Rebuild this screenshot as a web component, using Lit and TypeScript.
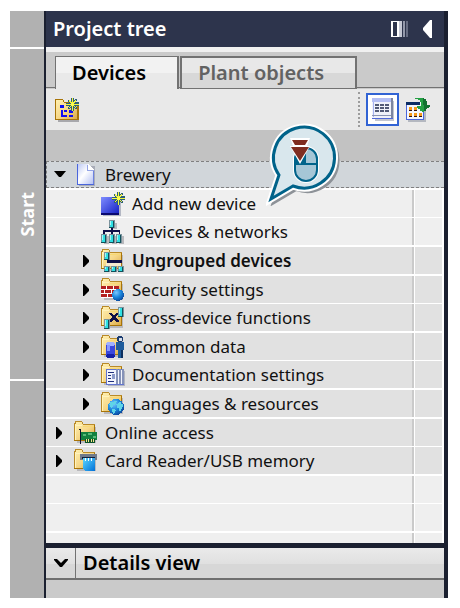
import { LitElement, html, svg, css, nothing } from "lit";
import { customElement, property } from "lit/decorators.js";
import { classMap } from "lit/directives/class-map.js";

/* Folder body shared by most tree icons */
const folder = svg`
  <path d="M3 6h19v16H3z" fill="#b9b9bd"/>
  <path d="M1 2h1V1h6v1h1v2h12v16H1z" fill="url(#fold)"/>
  <path d="M0 20V2h1V0h7v1h1v2h12v1H9V3H8V1H2v2H1v16z" fill="#b98a28"/>
  <path d="M20 4h1v16H0v-1h20z" fill="#a87408"/>
  <path d="M1 3h1v16H1zM2 4h6v1H2z" fill="#fff3bd"/>
  <path d="M9 5h11v1H9z" fill="#f8d873"/>`;

const defs = svg`<defs>
  <linearGradient id="fold" x1="0" y1="0" x2="1" y2="1">
    <stop offset="0" stop-color="#fff0b0"/><stop offset=".5" stop-color="#f6d788"/><stop offset="1" stop-color="#d9a640"/>
  </linearGradient>
  <linearGradient id="blue" x1="0" y1="0" x2="1" y2="1">
    <stop offset="0" stop-color="#7f8dff"/><stop offset="1" stop-color="#1520c4"/>
  </linearGradient>
  <linearGradient id="paper" x1="0" y1="0" x2="1" y2="1">
    <stop offset="0" stop-color="#b9c6f4"/><stop offset=".45" stop-color="#ffffff"/><stop offset="1" stop-color="#aebcf2"/>
  </linearGradient>
  <radialGradient id="ball" cx=".35" cy=".3" r=".8">
    <stop offset="0" stop-color="#7cc8ff"/><stop offset=".5" stop-color="#1a86dc"/><stop offset="1" stop-color="#0a3f94"/>
  </radialGradient>
  <linearGradient id="cyan" x1="0" y1="0" x2="1" y2="1">
    <stop offset="0" stop-color="#5fd8ff"/><stop offset="1" stop-color="#0070d8"/>
  </linearGradient>
</defs>`;

const star = (x: number, y: number) => svg`<g transform="translate(${x} ${y})">
  <path d="M5 0h3v2h1V1h2v2h-1v1h3v4h-3v1h1v2H9v-1H8v3H5v-3H4v1H2V9h1V8H0V5h3V4H2V2h2v1h1z" fill="#2c6078"/>
  <path d="M6 0h1v4h1V3h1V2h1v2H9v1h-1v1h5v1H8v1h1v1h1v1H9V9H8V8H7v5H6V8H5v1H4v1H3V9h1V8h1V7H0V6h5V5H4V4H3V2h1v1h1v1h1z" fill="#f6f63c"/>
  <path d="M5 5h3v3H5z" fill="#fbfb50"/>
</g>`;

const chip = (x: number, y: number, h: number) => svg`
  <path d="M${x} ${y}h6v${h}h-6z" fill="#7a929c"/>
  <path d="M${x + 4} ${y + 1}h1v${h - 1}h-5v-1h4z" fill="#12505a"/>
  <path d="M${x + 1} ${y + 1}h3v${h - 2}h-3z" fill="#2fe0e4"/>
  <path d="M${x + 1} ${y + 1}h1v${h - 4}h-1z" fill="#a8f6f4"/>`;

const art: Record<string, unknown> = {
  project: svg`
    <path d="M5 3h16v20H5z" fill="#a9adb8"/>
    <path d="M3 1h11l6 6v15H3z" fill="url(#paper)"/>
    <path d="M3 1h1v20H3zM3 21h17v1H3z" fill="#4a66dc"/><path d="M19 7h1v14h-1z" fill="#6c82e0"/>
    <path d="M14 1v6h6z" fill="#fff"/><path d="M13 2h1v5h6v1h-7z" fill="#93a3e6"/>`,
  add: svg`
    <path d="M2 7h18v17H2z" fill="#b4b8c4"/>
    <path d="M0 5h18v17H0z" fill="url(#blue)"/><path d="M0 21h18v2H0z" fill="#0a0a70"/>${star(11, 0)}`,
  network: svg`
    <path d="M10 3h6v6h-6zM3 16h5v8H3zM11 16h5v8h-5zM18 16h5v8h-5z" fill="#b9b9bd"/>
    <path d="M10 8h2v2h7v4h-1v-2h-6v2h-2v-2H4v2H2v-4h8z" fill="#101048"/>
    ${chip(8, 0, 8)}${chip(0, 14, 9)}${chip(8, 14, 9)}${chip(15, 14, 9)}`,
  ungrouped: svg`${folder}
    <path d="M6 11h15v3H6z" fill="#101048"/><path d="M5 14h15v3H5z" fill="#f6ead0"/>
    ${chip(3, 3, 8)}${chip(3, 17, 6)}${chip(10, 17, 6)}${chip(17, 17, 6)}`,
  security: svg`${folder}
    <path d="M0 8h18v12H0z" fill="#fff"/>
    <path d="M0 8h5v3H0zM6 8h6v3H6zM13 8h5v3h-5zM0 12h3v3H0zM4 12h6v3H4zM11 12h7v3h-7zM0 16h6v3H0zM7 16h6v3H7z" fill="#b32020"/>
    <circle cx="17" cy="17" r="6" fill="url(#ball)"/>`,
  cross: svg`${folder}
    <path d="M8 7h3v1h1v1h2V8h1V7h3v1h-1v1h-1v1h-1v2h1v1h1v1h1v2h-3v-1h-1v-1h-2v1h-1v1H8v-2h1v-1h1v-1h1v-2h-1V9H9V8H8z" fill="#101048"/>
    ${chip(17, 1, 10)}${chip(3, 13, 10)}`,
  common: svg`${folder}
    <path d="M5 9h9v12H5z" fill="#3a48dc"/><ellipse cx="9.5" cy="9" rx="4.5" ry="2" fill="#9fb0ff"/>
    <path d="M6 10h3v6H6z" fill="#8897ff"/><ellipse cx="9.5" cy="21" rx="4.5" ry="2" fill="#1420a8"/>
    <circle cx="19" cy="4" r="3" fill="#1c3c70"/><path d="M18 3h3v3h-3z" fill="#d4dce8"/>
    <path d="M15 7h8v8h-1v8h-5v-8h-2z" fill="#1f5c9c"/><path d="M20 15h2v8h-2z" fill="#0d2f5e"/>`,
  docs: svg`${folder}
    <path d="M7 8h17v15H7z" fill="#b0b4c0"/>
    <path d="M5 6h18v16H5z" fill="#f2f4fc"/><path d="M5 6h18v1H5zM5 6h1v15H5zM5 21h18v1H5z" fill="#6274d0"/>
    <path d="M7 9h6v1H7zM7 12h3v1H7zM7 15h3v1H7zM7 18h6v1H7z" fill="#20307c"/><path d="M11 11h3v5h-3z" fill="#8c9ac8"/>
    <path d="M15 6h2v15h-2zM18 6h2v15h-2zM21 6h2v15h-2z" fill="#8592b8"/>`,
  language: svg`${folder}
    <circle cx="15" cy="15" r="8" fill="url(#ball)"/>
    <path d="M9 10h4V9h3v1h-1v2h-1v1h-2v2h-1v1h-1v-1H9v-2H8v-1h1zM16 12h1v-1h1v-1h2v2h2v3h-1v2h-1v2h-2v-3h-2v-3h-1v-1h1zM11 17h3v1h1v1h-1v2h-1v1h-1v-2h-1z" fill="#5fd4e8"/>`,
  online: svg`${folder}
    <path d="M7 11h16v8H7z" fill="#12803e"/><path d="M9 13h3v2H9zM14 12h4v2h-4zM19 15h3v2h-3z" fill="#57b878"/>
    <path d="M5 8h2v15H6V9H5z" fill="#101030"/><path d="M11 18h10v4H11z" fill="#0c5028"/>
    <path d="M12 18h1v3h-1zM14 18h1v3h-1zM17 18h1v3h-1zM19 18h1v3h-1z" fill="#f4e68c"/>`,
  card: svg`${folder}
    <path d="M6 5h17v6H6z" fill="#6f7a8a"/><path d="M8 8h13v2H8z" fill="#10203c"/>
    <path d="M9 9h12v13H11l-2-2z" fill="url(#cyan)"/>
    <path d="M11 9h1v3h-1zM14 9h1v3h-1zM17 9h1v3h-1z" fill="#fff"/>`,
  groupFolder: svg`
    <path d="M3 5h21v19H3z" fill="#a8a8ac"/>
    <path d="M1 2h8v2h14v18H1z" fill="url(#fold)"/>
    <path d="M0 1h8v1H1v20H0zM8 2h1v2H8zM9 4h14v1H9zM0 21h24v1H0zM22 4h2v18h-2z" fill="#a87408"/>
    <path d="M5 7h4v3H5zM6 12h2v5h4v2H6zM9 12h3v2H9zM14 12h4v3h-4zM14 17h4v2h-4z" fill="#1010f0"/>${star(11, 0)}`,
  list: svg`
    <path d="M3 3h19v20H3z" fill="#c2c6d0"/>
    <path d="M0 0h21v21H0z" fill="#7c86a0"/><path d="M0 0h19v20H0z" fill="#f0f2fa"/>
    <path d="M0 0h19v4H0z" fill="#b4bef4"/><path d="M1 4h1v15H1z" fill="#a6b2f2"/><path d="M0 17h19v1H0z" fill="#8a94b4"/><path d="M0 20h21v1H0z" fill="#5068d8"/>
    <path d="M3 6h4v2H3zM8 6h4v2H8zM13 6h4v2h-4zM3 9h4v2H3zM8 9h4v2H8zM13 9h4v2h-4zM3 12h4v2H3zM8 12h4v2H8zM13 12h4v2h-4z" fill="#525a76"/>`,
  overview: svg`
    <path d="M2 6h18v18H2z" fill="#b4b8c0"/>
    <path d="M0 4h18v18H0z" fill="#f4f6fe"/><path d="M0 4h14v3H0z" fill="#0c2c64"/><path d="M0 7h1v15H0zM0 21h18v1H0zM17 12h1v10h-1z" fill="#4a66dc"/>
    <path d="M3 9h3v3H3zM8 9h3v3H8zM3 15h3v3H3zM8 15h3v3H8zM13 15h3v3h-3z" fill="#f59a1c"/>
    <path d="M3 12h3v1H3zM8 12h3v1H8zM3 18h3v1H3zM8 18h3v1H8zM13 18h3v1h-3z" fill="#30100c"/>
    <path d="M9 0h9v1h2v2h1v4h3v2h-1v1h-2v1h-1v2h-2v1h-2v-1h-2v-2h-2v-1h-1V8h4V4h-1V2h-2V1H9z" fill="#24a044"/>
    <path d="M17 0h1v1h2v2h1v4h3v2h-1v1h-2v1h-1v2h-2V7h-1z" fill="#117030"/>`,
};

const icon = (name: string) => html`<svg class="icon" width="24" height="24" viewBox="0 0 24 24"
  shape-rendering="crispEdges" aria-hidden="true">${defs}${art[name]}</svg>`;

const bubble = "M27 66 L5 79 L13 55 A30.5 30.5 0 1 1 27 66z";

const callout = html`<svg class="callout" width="80" height="86" viewBox="0 0 80 86" aria-hidden="true">
  <path d=${bubble} transform="translate(3 3)" fill="#8d9298" stroke="#8d9298" stroke-width="4"/>
  <path d=${bubble} fill="#fff" stroke="#fff" stroke-width="7"/>
  <path d=${bubble} fill="#d9e7ed" stroke="#00638a" stroke-width="3"/>
  <rect x="27" y="26" width="26" height="37" rx="13" fill="#fff"/>
  <rect x="29" y="28" width="22" height="33" rx="11" fill="#a5c6d6" stroke="#00638a" stroke-width="2"/>
  <path d="M29 43V39a11 11 0 0 1 11-11V43z" fill="#00638a"/><path d="M29 43h22v2H29z" fill="#00638a"/>
  <path d="M24 18h20l-3 8h3L34 44 24 26h3z" fill="#fff"/>
  <path d="M26 20h16l-3 5H29z" fill="#7f2d20"/><path d="M25 27h18l-9 14z" fill="#7f2d20"/>
</svg>`;

interface Node {
  label: string;
  icon: string;
  level: 1 | 2;
  kind?: "leaf" | "open";
  bold?: boolean;
  thick?: boolean;
  callout?: boolean;
}

const nodes: Node[] = [
  { label: "Add new device", icon: "add", level: 2, kind: "leaf", callout: true },
  { label: "Devices & networks", icon: "network", level: 2, kind: "leaf", thick: true },
  { label: "Ungrouped devices", icon: "ungrouped", level: 2, bold: true, thick: true },
  { label: "Security settings", icon: "security", level: 2 },
  { label: "Cross-device functions", icon: "cross", level: 2, thick: true },
  { label: "Common data", icon: "common", level: 2 },
  { label: "Documentation settings", icon: "docs", level: 2, thick: true },
  { label: "Languages & resources", icon: "language", level: 2, thick: true },
  { label: "Online access", icon: "online", level: 1 },
  { label: "Card Reader/USB memory", icon: "card", level: 1, thick: true },
];

@customElement("tree-row")
export class TreeRow extends LitElement {
  @property({ attribute: false }) node!: Node;

  static styles = css`
    :host { display: block; }
    .row { display: grid; grid-template-columns: 1fr 2px 1px 27px 2px; background: #fff; height: 27px; padding-bottom: 1px; }
    .thick { padding-bottom: 2px; }
    .cell { display: flex; align-items: center; position: relative; padding-left: 6px; background: #e1e1e1; min-width: 0; }
    .nested { padding-left: 33px; }
    .side { grid-column: 4; background: #e1e1e1; }
    .rule { background: #cacaca; }
    .leaf .cell, .leaf .side { background: #efefef; }
    .open { display: flex; height: 27px; padding: 0; }
    .open .cell { flex: 1; padding-left: 5px; background: #d1d6da; border: 1px dashed #808080; border-right: 0; }
    .toggle { box-sizing: border-box; width: 22px; height: 24px; flex: none; padding: 0 0 0 3px; border: 0; background: none; display: flex; align-items: center; }
    .open .toggle { padding: 0 0 2px 1px; }
    .icon { flex: none; margin-right: 7px; }
    .label { color: #111; white-space: nowrap; }
    .bold { font-weight: 600; }
    .callout { position: absolute; left: 220px; top: -70px; z-index: 1; }
  `;

  render() {
    const n = this.node;
    const open = n.kind === "open";
    const leaf = n.kind === "leaf";
    return html`<div class=${classMap({ row: true, thick: !!n.thick, leaf, open })}
        role="treeitem" aria-level=${n.level} aria-expanded=${leaf ? nothing : String(open)}>
      <div class=${classMap({ cell: true, nested: n.level === 2 })}>
        ${leaf
          ? html`<span class="toggle"></span>`
          : html`<button class="toggle" aria-label=${`${open ? "Collapse" : "Expand"} ${n.label}`}>
              ${open
                ? html`<svg width="14" height="8" viewBox="0 0 14 8" aria-hidden="true"><path d="M1 1h12L8 7H6z"/></svg>`
                : html`<svg width="8" height="12" viewBox="0 0 8 12" aria-hidden="true"><path d="M1 0h1l5 5v2l-5 5H1z"/></svg>`}
            </button>`}
        ${icon(n.icon)}
        <span class=${classMap({ label: true, bold: !!n.bold })}>${n.label}</span>
        ${n.callout ? callout : nothing}
      </div>
      ${open ? nothing : html`<div class="rule"></div><div class="side"></div>`}
    </div>`;
  }
}

@customElement("app-root")
export class AppRoot extends LitElement {
  static styles = css`
    :host { display: block; background: #fff; padding: 11px 12px 10px 10px; font: 17px/24px "Noto Sans", "Open Sans", sans-serif; color: #000; }
    button { font: inherit; color: inherit; border: 0; padding: 0; background: none; }
    .frame { display: grid; grid-template-columns: 34px 1fr; }
    .strip { display: grid; grid-template-rows: 36px 330px 1fr; gap: 2px; }
    .seg { background: #b1b1b1; display: flex; align-items: center; justify-content: center; }
    .start { writing-mode: vertical-rl; transform: rotate(180deg); color: #fff; font-size: 18px; font-weight: 700; text-align: center; }
    .panel { border-left: 2px solid #1b2030; border-right: 4px solid #1b2030; min-width: 0; background: #cacaca; }
    .title { display: flex; align-items: center; height: 36px; padding: 0 12px 0 7px; background: #2d344c; color: #fff; }
    h2 { font-size: 20px; font-weight: 600; margin: 0; line-height: 24px; flex: 1; white-space: nowrap; }
    .title .tool { height: 18px; margin-left: 14px; }
    .title svg { display: block; }
    .tabs { display: flex; gap: 1px; height: 32px; padding: 4px 0 0 9px; border-top: 5px solid #f0f0f0; box-shadow: inset 0 -1px #727272; }
    .tab { box-sizing: border-box; border: 2px solid #727272; border-bottom-width: 1px; height: 33px; font-size: 20px; font-weight: 600; color: #626262; padding: 0 31px 0 16px; background: linear-gradient(#e8e8e8 50%, #d8d8d8 50%); white-space: nowrap; margin-bottom: -1px; }
    .tab.active { color: #000; border-width: 1px 2px 0 1px; padding: 0 31px 0 16px; background: linear-gradient(#f2f2f2 50%, #e9e9e9 50%); }
    .tools { display: flex; align-items: center; height: 41px; padding: 0 14px 0 9px; background: #e9e9e9; border-top: 1px solid transparent; background-clip: padding-box; }
    .tool { display: flex; align-items: center; justify-content: center; }
    .tools .icon { display: block; }
    .split { margin-left: auto; align-self: stretch; margin-top: 3px; margin-bottom: 3px; border-left: 2px dotted #9c9c9c; }
    .pressed { box-sizing: border-box; width: 33px; height: 33px; margin: 0 7px 0 6px; border: 2px solid #3163d4; background: #fff; padding: 1px 0 0 2px; }
    .head { height: 31px; background: #c2c2c2; }
    .body { background: #fff; }
    .root { margin-bottom: 2px; }
    .blank { display: grid; grid-template-columns: 1fr 2px 1px 27px 2px; height: 27px; margin-bottom: 1px; }
    .blank + .blank { margin-bottom: 2px; }
    .blank + .blank + .blank { height: 10px; margin: 0; }
    .fill { background: #efefef; }
    .rule { background: #cacaca; }
    .fill.side { grid-column: 4; }
    .details { border-top: 5px solid #1b2030; }
    .bar { display: flex; height: 30px; border-bottom: 2px solid #6f6f6f; background: linear-gradient(#eaeaea, #e0e0e0 52%, #d7d7d7 52%); }
    .fold { width: 30px; display: flex; align-items: center; justify-content: center; border-right: 1px solid #727272; }
    .bar h2 { padding: 3px 7px; }
    .empty { height: 18px; }
  `;

  render() {
    const blank = html`<div class="blank"><div class="fill"></div><div class="rule"></div><div class="fill side"></div></div>`;
    return html`<div class="frame">
      <nav class="strip">
        <div class="seg"></div>
        <div class="seg"><button class="start">Start</button></div>
        <div class="seg"></div>
      </nav>
      <main class="panel">
        <header class="title">
          <h2>Project tree</h2>
          <button class="tool" aria-label="Reduce automatically">
            <svg width="18" height="18" viewBox="0 0 18 18" shape-rendering="crispEdges"><path d="M0 1h8v16H0z" fill="#fff"/><path d="M2 2h4v14H2z" fill="#2d344c"/><path d="M8 1h3v16H8z" fill="#c5c8d4"/><path d="M12 1h2v16h-2z" fill="#9499ab"/><path d="M15 1h2v16h-2z" fill="#666c82"/></svg>
          </button>
          <button class="tool" aria-label="Collapse">
            <svg width="9" height="18" viewBox="0 0 9 18"><path d="M9 0v18H7L0 10V8l7-8z" fill="#fff"/></svg>
          </button>
        </header>
        <div class="tabs" role="tablist">
          <button class="tab active" role="tab" aria-selected="true">Devices</button>
          <button class="tab" role="tab" aria-selected="false">Plant objects</button>
        </div>
        <div class="tools" role="toolbar">
          <button class="tool" aria-label="Create new group">${icon("groupFolder")}</button>
          <span class="split"></span>
          <button class="tool pressed" aria-label="Show column headings">${icon("list")}</button>
          <button class="tool" aria-label="Show overview">${icon("overview")}</button>
        </div>
        <div class="head"></div>
        <div class="body" role="tree" aria-label="Project tree">
          <tree-row class="root" .node=${{ label: "Brewery", icon: "project", level: 1, kind: "open" }}></tree-row>
          ${nodes.map((n) => html`<tree-row .node=${n}></tree-row>`)}
          ${blank}${blank}${blank}
        </div>
        <section class="details">
          <header class="bar">
            <button class="fold" aria-label="Expand details view">
              <svg width="16" height="12" viewBox="0 0 16 12"><path d="M1 2h3l4 4 4-4h3v1L9 10H7L1 3z"/></svg>
            </button>
            <h2>Details view</h2>
          </header>
          <div class="empty"></div>
        </section>
      </main>
    </div>`;
  }
}
